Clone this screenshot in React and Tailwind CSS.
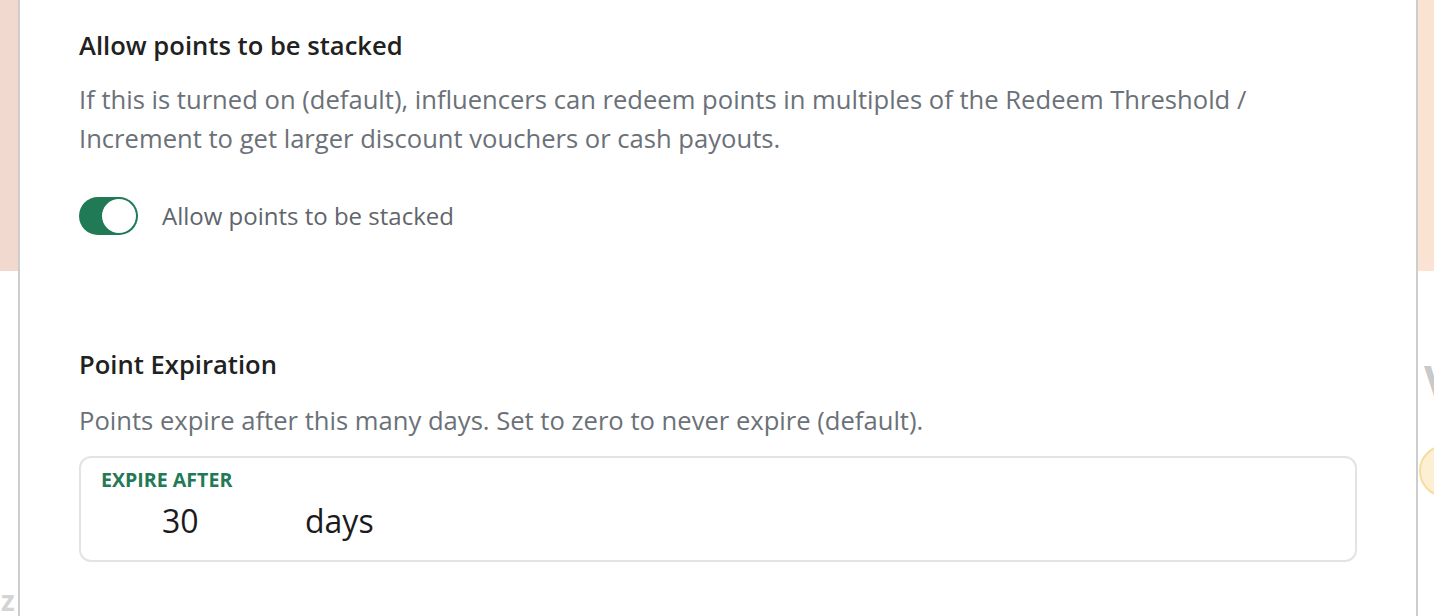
import { useState } from 'react';

const Toggle = ({ on, onChange }) => (
  <button
    type="button"
    onClick={() => onChange(!on)}
    className={`flex h-[38px] w-[59px] items-center rounded-full p-[2px] ${on ? 'bg-[#1f7a55] justify-end' : 'bg-gray-300 justify-start'}`}
  >
    <span className="block h-[34px] w-[34px] rounded-full bg-white" />
  </button>
);

const App = () => {
  const [stacked, setStacked] = useState(true);

  return (
    <div className="flex h-[616px] w-full overflow-hidden bg-white font-['Open_Sans',sans-serif]">
      {/* left neighbour strip */}
      <div className="flex w-[18px] shrink-0 flex-col overflow-hidden">
        <div className="h-[271px] bg-[#f2d9cf]" />
        <div className="mt-auto pb-[2px] pl-[1px] text-[28px] font-bold leading-none text-[#d4d4d4]">z</div>
      </div>

      {/* settings panel */}
      <div className="w-[1400px] shrink-0 border-x-2 border-[#cdcdcd] bg-white px-[59px] pt-[30px]">
        <h3 className="text-[25.6px] font-semibold leading-[32px] text-[#212121]">Allow points to be stacked</h3>
        <p className="mt-[18px] text-[25.6px] leading-[39px] text-[#6b7178]">
          If this is turned on (default), influencers can redeem points in multiples of the Redeem Threshold /
          <br />
          Increment to get larger discount vouchers or cash payouts.
        </p>
        <div className="mt-[39px] flex items-center gap-[24px]">
          <Toggle on={stacked} onChange={setStacked} />
          <span className="text-[24px] text-[#5f656c]">Allow points to be stacked</span>
        </div>

        <h3 className="mt-[114px] text-[25.6px] font-semibold leading-[32px] text-[#212121]">Point Expiration</h3>
        <p className="mt-[20px] text-[25.6px] leading-[39px] text-[#6b7178]">
          Points expire after this many days. Set to zero to never expire (default).
        </p>
        <div className="mt-[16px] h-[106px] rounded-[12px] border-2 border-[#e1e3e6] px-[20px] pt-[10px]">
          <div className="text-[19.6px] font-bold leading-[24px] text-[#1f7a55]">EXPIRE AFTER</div>
          <div className="mt-[9px] flex items-center text-[32px] leading-[40px] text-[#1b1b1b]">
            <span className="ml-[61px] w-[143px]">30</span>
            <span>days</span>
          </div>
        </div>
      </div>

      {/* right neighbour strip */}
      <div className="flex min-w-0 flex-1 flex-col overflow-hidden">
        <div className="h-[271px] bg-[#fbe3d4]" />
        <div className="ml-[6px] mt-[88px] text-[44px] font-bold leading-none text-[#c9c9c9]">V</div>
        <div className="ml-[1px] mt-[42px] h-[52px] w-[52px] shrink-0 rounded-full border-2 border-[#f6dca0] bg-[#fdf0d2]" />
      </div>
    </div>
  );
};

export default App;
